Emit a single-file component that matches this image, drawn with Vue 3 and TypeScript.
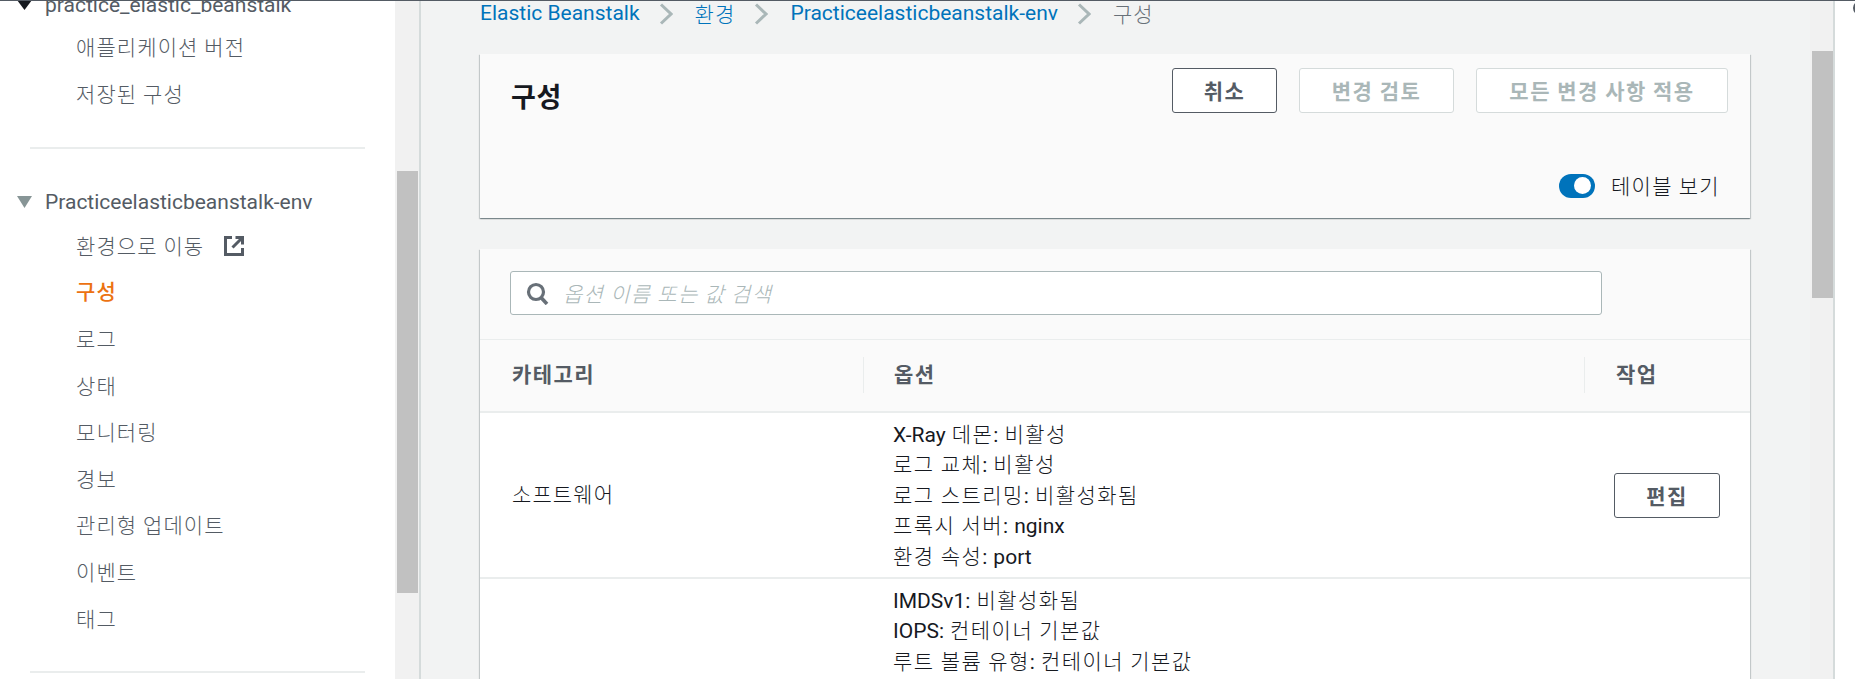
<script setup lang="ts">
const appItems = ['애플리케이션 버전', '저장된 구성']
const envItems = ['로그', '상태', '모니터링', '경보', '관리형 업데이트', '이벤트', '태그']
const softwareLines = [
  'X-Ray 데몬: 비활성',
  '로그 교체: 비활성',
  '로그 스트리밍: 비활성화됨',
  '프록시 서버: nginx',
  '환경 속성: port',
]
const instanceLines = [
  'IMDSv1: 비활성화됨',
  'IOPS: 컨테이너 기본값',
  '루트 볼륨 유형: 컨테이너 기본값',
]
function segs(s: string): { t: string; lat: boolean }[] {
  return s
    .split(/([A-Za-z0-9-]+|:)/)
    .filter((t) => t.length > 0)
    .map((t) => ({ t, lat: /^[A-Za-z0-9:-]+$/.test(t) }))
}
</script>

<template>
  <div class="page">
    <aside class="side">
      <div class="side-scroll">
        <div class="group-head first">
          <svg class="tri" width="15" height="10" viewBox="0 0 15 10"><path d="M0 0h15L7.5 10z" fill="#16191f" /></svg>
          <span>practice_elastic_beanstalk</span>
        </div>
        <a v-for="i in appItems" :key="i" class="nav">{{ i }}</a>
        <hr class="rule rule-a" />
        <div class="group-head second">
          <svg class="tri" width="15" height="12" viewBox="0 0 15 12"><path d="M0 0h15L7.5 12z" fill="#879596" /></svg>
          <span>Practiceelasticbeanstalk-env</span>
        </div>
        <a class="nav">환경으로 이동
          <svg class="ext" width="22" height="22" viewBox="0 0 22 22" fill="none" stroke="#545b64" stroke-width="3">
            <path d="M9 2.5H2.5v17h17V13" />
            <path d="M9.5 12.5 19 3M12.5 2.5h7v7" />
          </svg>
        </a>
        <a class="nav active">구성</a>
        <a v-for="i in envItems" :key="i" class="nav">{{ i }}</a>
        <hr class="rule rule-b" />
      </div>
      <div class="sbar"><div class="thumb thumb-side"></div></div>
    </aside>

    <main class="main">
      <div class="content">
        <nav class="crumbs">
          <a class="link lat">Elastic Beanstalk</a>
          <svg class="chev" width="14" height="22" viewBox="0 0 14 22" fill="none" stroke="#aab7b8" stroke-width="3"><path d="M2 1.5 12 11 2 20.5" /></svg>
          <a class="link">환경</a>
          <svg class="chev" width="14" height="22" viewBox="0 0 14 22" fill="none" stroke="#aab7b8" stroke-width="3"><path d="M2 1.5 12 11 2 20.5" /></svg>
          <a class="link lat">Practiceelasticbeanstalk-env</a>
          <svg class="chev" width="14" height="22" viewBox="0 0 14 22" fill="none" stroke="#aab7b8" stroke-width="3"><path d="M2 1.5 12 11 2 20.5" /></svg>
          <span class="here">구성</span>
        </nav>

        <section class="card head-card">
          <div class="head-top">
            <h1>구성</h1>
            <div class="actions">
              <button class="btn cancel">취소</button>
              <button class="btn off review">변경 검토</button>
              <button class="btn off apply">모든 변경 사항 적용</button>
            </div>
          </div>
          <div class="toggle-row">
            <span class="toggle"><span class="knob"></span></span>
            <span class="toggle-label">테이블 보기</span>
          </div>
        </section>

        <section class="card table-card">
          <div class="search-row">
            <div class="search">
              <svg width="24" height="23" viewBox="0 0 24 23" fill="none" stroke="#687078"><circle cx="10" cy="10" r="7.5" stroke-width="3.2" /><path d="M15 15.5 21 22" stroke-width="3.6" /></svg>
              <span class="ph">옵션 이름 또는 값 검색</span>
            </div>
          </div>
          <div class="t-head">
            <div class="th c1 hc1">카테고리</div>
            <div class="th c2 hc2"><i class="sep"></i>옵션</div>
            <div class="th c3 hc3"><i class="sep"></i>작업</div>
          </div>
          <div class="t-row">
            <div class="c1 cat">소프트웨어</div>
            <div class="c2 opts">
              <div v-for="l in softwareLines" :key="l" class="line"><span v-for="(s, n) in segs(l)" :key="n" :class="{ lat: s.lat }">{{ s.t }}</span></div>
            </div>
            <div class="c3 act"><button class="btn edit">편집</button></div>
          </div>
          <div class="t-row">
            <div class="c1 cat"></div>
            <div class="c2 opts">
              <div v-for="l in instanceLines" :key="l" class="line"><span v-for="(s, n) in segs(l)" :key="n" :class="{ lat: s.lat }">{{ s.t }}</span></div>
            </div>
            <div class="c3 act"></div>
          </div>
        </section>
      </div>
      <div class="sbar main-bar"><div class="thumb thumb-main"></div></div>
    </main>

    <div class="rest"><span class="ring"></span></div>
  </div>
</template>

<style>
html, body { margin: 0; overflow: hidden; background: #fff; }
</style>

<style scoped>
.page {
  display: flex;
  width: 1855px;
  height: 679px;
  overflow: hidden;
  box-sizing: border-box;
  border-top: 1px solid #545b64;
  font-family: "Noto Sans CJK KR", "Noto Sans", sans-serif;
  font-size: 21px;
  font-weight: 300;
  letter-spacing: 1.1px;
  line-height: 30.8px;
  color: #16191f;
}
.lat { font-family: "Roboto", "Noto Sans CJK KR", sans-serif; letter-spacing: 0; font-weight: 400; }
.side { display: flex; width: 421px; flex: none; box-sizing: border-box; border-right: 2px solid #d5dbdb; }
.side-scroll { width: 395px; flex: none; overflow: hidden; color: #545b64; }
.group-head { display: flex; align-items: center; height: 46px; padding-left: 17px; gap: 13px; font-family: "Roboto", "Noto Sans CJK KR", sans-serif; font-size: 21px; letter-spacing: 0; font-weight: 400; }
.group-head.first { margin-top: -19px; margin-bottom: -4.7px; }
.group-head.second { margin-bottom: -3px; }
.group-head .tri { flex: none; }
.nav { display: flex; align-items: center; height: 46.6px; box-sizing: border-box; padding-left: 76px; }
.nav.active { color: #ec7211; font-weight: 500; padding-bottom: 3px; }
.ext { margin-left: 19px; margin-top: 2px; }
.rule { border: 0; border-top: 2px solid #eaeded; margin: 0 30px; }
.rule-a { margin-top: 30.5px; margin-bottom: 30px; }
.rule-b { margin-top: 30px; }
.sbar { width: 24px; flex: none; background: #f1f1f1; padding: 0 1px 0 2px; box-sizing: border-box; }
.thumb { background: #c1c1c1; }
.thumb-side { height: 422px; margin-top: 170px; }
.main { flex: 1; display: flex; background: #f2f3f3; min-width: 0; border-right: 2px solid #d5dbdb; }
.content { flex: 1; padding: 0 60px 0 59px; min-width: 0; }
.main-bar { width: 23px; padding: 0 0 0 2px; }
.thumb-main { height: 247px; margin-top: 50px; }
.rest { width: 20px; flex: none; overflow: hidden; padding-left: 18px; box-sizing: border-box; }
.ring { display: block; width: 14px; height: 14px; box-sizing: border-box; border: 2px solid #545b64; border-radius: 50%; }
.crumbs { display: flex; align-items: center; height: 25px; gap: 21px; line-height: 25px; }
.link { color: #0073bb; }
.here { color: #687078; }
.chev { flex: none; margin: 0 1px 0 -2px; }
.card {
  background: #fafafa;
  box-shadow: 0 1px 1px 0 rgba(0, 28, 36, .3), 1px 1px 1px 0 rgba(0, 28, 36, .15), -1px 1px 1px 0 rgba(0, 28, 36, .15);
}
.head-card { margin-top: 28px; height: 164px; padding: 14px 31px 17px; box-sizing: border-box; display: flex; flex-direction: column; justify-content: space-between; }
.head-top { display: flex; justify-content: space-between; align-items: flex-start; }
h1 { margin: 10px 0 0; font-size: 27px; line-height: 36px; font-weight: 700; letter-spacing: .7px; }
.actions { display: flex; gap: 22px; margin-right: -9px; }
.btn {
  height: 45px;
  font: inherit;
  font-weight: 700;
  background: #fff;
  color: #545b64;
  border: 1px solid #545b64;
  border-radius: 3px;
  padding: 0;
  letter-spacing: 1.5px;
}
.btn.off { color: #aab7b8; border-color: #d5dbdb; }
.cancel { width: 105px; }
.review { width: 155px; }
.apply { width: 252px; }
.toggle-row { display: flex; align-items: center; justify-content: flex-end; gap: 16px; margin-right: -1px; }
.toggle { display: flex; width: 36px; height: 24px; border-radius: 12px; background: #0073bb; justify-content: flex-end; align-items: center; padding: 0 4px 0 0; box-sizing: border-box; }
.knob { width: 17px; height: 17px; background: #fff; border-radius: 50%; }
.toggle-label { letter-spacing: 1.3px; }
.table-card { margin-top: 31px; height: 500px; }
.search-row { height: 91px; padding: 22px 148px 0 30px; box-sizing: border-box; border-bottom: 1px solid #eaeded; }
.search { display: flex; align-items: center; height: 44px; gap: 13px; background: #fff; border: 1px solid #aab7b8; border-radius: 3px; padding-left: 15px; box-sizing: border-box; }
.ph { font-style: italic; color: #aab7b8; letter-spacing: 1.3px; }
.t-head { display: flex; height: 73px; box-sizing: border-box; padding-bottom: 4px; align-items: center; border-bottom: 2px solid #eaeded; font-weight: 700; color: #545b64; }
.th { position: relative; box-sizing: border-box; letter-spacing: 1.4px; }
.sep { position: absolute; left: 0; top: -1px; height: 36px; width: 1px; background: #eaeded; }
.c1 { width: 383px; padding-left: 32px; box-sizing: border-box; flex: none; }
.c2 { width: 721px; padding-left: 30px; box-sizing: border-box; flex: none; }
.c3 { flex: 1; padding-left: 32px; box-sizing: border-box; }
.hc2 { padding-left: 31px; }
.t-row { display: flex; align-items: center; background: #fff; padding: 5px 0 7px; border-bottom: 2px solid #eaeded; }
.cat { padding-bottom: 2px; }
.opts { line-height: 30.4px; letter-spacing: 1.45px; }
.line { height: 30.4px; white-space: nowrap; }
.act { padding-left: 30px; padding-top: 3px; }
.edit { width: 106px; }
</style>
